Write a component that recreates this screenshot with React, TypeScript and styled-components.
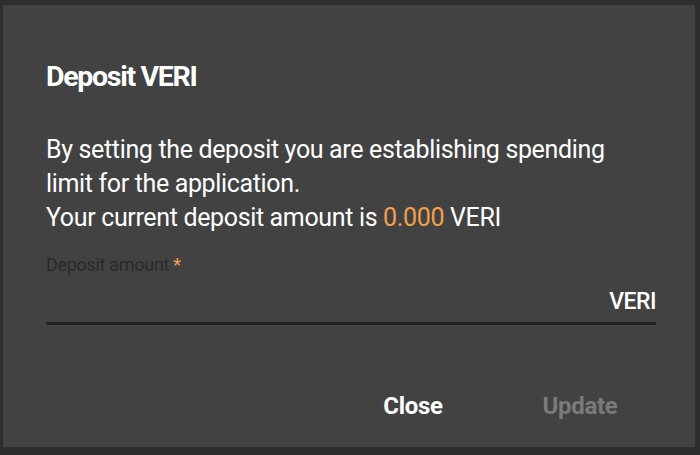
import React from 'react'
import styled, { createGlobalStyle } from 'styled-components'

const GlobalStyle = createGlobalStyle`
  html, body {
    margin: 0;
    padding: 0;
    background: #2e2e2e;
    font-family: Roboto, "Liberation Sans", sans-serif;
  }
`

export default function App() {
  return (
    <>
      <GlobalStyle />
      <Dialog>
        <Title>Deposit VERI</Title>
        <Body>
          By setting the deposit you are establishing spending limit for the
          application.
          <br />
          Your current deposit amount is <Amount>0.000</Amount> VERI
        </Body>
        <Field>
          <Label>
            Deposit amount <Required>*</Required>
          </Label>
          <InputRow>
            <Input type='text' />
            <Suffix>VERI</Suffix>
          </InputRow>
        </Field>
        <Actions>
          <Button>Close</Button>
          <Button disabled>Update</Button>
        </Actions>
      </Dialog>
    </>
  )
}

const Dialog = styled.div`
  box-sizing: border-box;
  margin: 5px 5px 0 3px;
  height: 442px;
  background: #424242;
  display: flex;
  flex-direction: column;
  padding: 0 39px 0 43px;
  color: #fff;
`
const Title = styled.h2`
  margin: 54px 0 0;
  font-size: 28.5px;
  font-weight: 700;
  line-height: 36px;
  letter-spacing: -1.3px;
`
const Body = styled.p`
  margin: 38px 0 0;
  font-size: 25px;
  line-height: 34px;
  letter-spacing: -0.35px;
  max-width: 590px;
`
const Amount = styled.span`
  color: #f4a04a;
`
const Field = styled.div`
  margin-top: 19px;
  display: flex;
  flex-direction: column;
`
const Label = styled.label`
  font-size: 18px;
  color: #2a2a2a;
  line-height: 22px;
  letter-spacing: -0.3px;
`
const Required = styled.span`
  color: #f4a04a;
`
const InputRow = styled.div`
  display: flex;
  align-items: center;
  margin-top: 12px;
  padding-bottom: 7px;
  border-bottom: 3px solid #222;
`
const Input = styled.input`
  flex: 1;
  background: transparent;
  border: none;
  outline: none;
  color: #fff;
  font: inherit;
  font-size: 20px;
`
const Suffix = styled.span`
  font-size: 23px;
  font-weight: 500;
  letter-spacing: -0.5px;
  color: #fff;
`
const Actions = styled.div`
  margin: auto 11px 17px 0;
  display: flex;
  justify-content: flex-end;
  gap: 37px;
`
const Button = styled.button`
  width: 130px;
  height: 48px;
  padding: 0;
  background: transparent;
  border: none;
  font-family: inherit;
  font-size: 24px;
  font-weight: 700;
  letter-spacing: -0.3px;
  color: #fff;
  cursor: pointer;

  &:disabled {
    color: #7a7a7a;
    cursor: default;
  }
`
